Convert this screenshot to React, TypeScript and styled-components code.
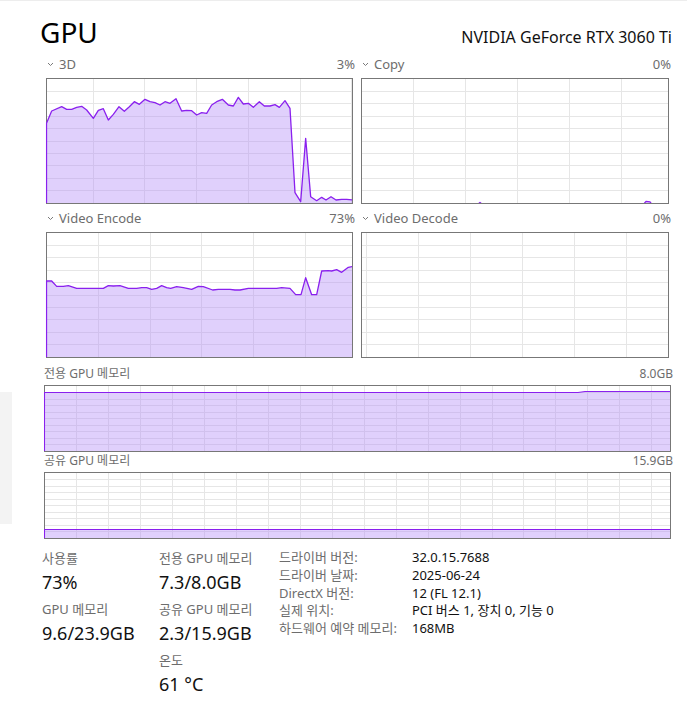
import React from "react";
import styled, { createGlobalStyle } from "styled-components";

const FONT = `"Noto Sans", "Noto Sans CJK KR", sans-serif`;

const GlobalStyle = createGlobalStyle`
  html, body { margin: 0; padding: 0; background: #ffffff; }
  body { font-family: ${FONT}; overflow: hidden; }
`;

type Pt = [number, number];

const Page = styled.div`
  display: flex;
  width: 687px;
  height: 701px;
  box-sizing: border-box;
  border-top: 1px solid #ededed;
  font-family: ${FONT};
`;

const SideStrip = styled.div`
  width: 12px;
  flex: none;
`;

const SideBlock = styled.div`
  margin-top: 391px;
  height: 132px;
  background: #f3f3f3;
`;

const Main = styled.div`
  margin-left: 28px;
  width: 632px;
  display: flex;
  flex-direction: column;
`;

const Header = styled.header`
  display: flex;
  justify-content: space-between;
  align-items: baseline;
  padding-top: 14px;
`;

const Title = styled.h1`
  margin: 0;
  font-size: 28px;
  line-height: 34px;
  font-weight: 400;
  color: #000;
`;

const Model = styled.div`
  font-size: 16px;
  line-height: 20px;
  color: #111;
`;

const ChartGrid = styled.div`
  display: grid;
  grid-template-columns: 307px 308px;
  column-gap: 8px;
  row-gap: 6px;
  margin: 7px 0 0 6px;
`;

const Cell = styled.div`
  display: flex;
  flex-direction: column;
`;

const LabelRow = styled.div<{ $gap?: number; $size?: number }>`
  display: flex;
  justify-content: space-between;
  align-items: center;
  height: 16px;
  font-size: ${(p) => p.$size ?? 13}px;
  line-height: 16px;
  color: #6d6d6d;
  margin-bottom: ${(p) => p.$gap ?? 6}px;
`;

const LabelName = styled.span`
  display: flex;
  align-items: center;
  gap: 5px;
  padding-left: 1px;
`;

const Percent = styled.span`
  margin-right: -2px;
`;

const ChartBox = styled.div<{ $h: number }>`
  box-sizing: border-box;
  border: 1px solid #777;
  height: ${(p) => p.$h}px;
  width: 100%;
  svg {
    display: block;
  }
`;

const MemorySection = styled.section`
  display: flex;
  flex-direction: column;
  margin-top: 8px;
  padding-left: 4px;
  width: 627px;
`;

const MemBlock = styled.div<{ $top?: number }>`
  display: flex;
  flex-direction: column;
  margin-top: ${(p) => p.$top ?? 0}px;
`;

const Stats = styled.div`
  display: grid;
  grid-template-columns: 117px 120px auto;
  align-items: start;
  margin-top: 10px;
  padding-left: 2px;
`;

const StatCol = styled.div`
  display: flex;
  flex-direction: column;
`;

const Stat = styled.div`
  display: flex;
  flex-direction: column;
  margin-bottom: 6px;
`;

const StatLabel = styled.div`
  font-size: 13px;
  line-height: 18px;
  color: #6d6d6d;
`;

const StatValue = styled.div`
  font-size: 18px;
  line-height: 24px;
  color: #111;
  margin-top: 3px;
`;

const InfoGrid = styled.dl`
  display: grid;
  grid-template-columns: 133px auto;
  align-content: start;
  margin: 0;
  font-size: 13px;
  line-height: 17.75px;
`;

const InfoKey = styled.dt`
  margin: 0;
  color: #6d6d6d;
`;

const InfoVal = styled.dd`
  margin: 0;
  color: #111;
`;

const Chevron = () => (
  <svg width="7" height="5" viewBox="0 0 7 5">
    <polyline points="1,1 3.5,3.5 6,1" fill="none" stroke="#7a7a7a" strokeWidth="1" />
  </svg>
);

interface ChartProps {
  id: string;
  w: number;
  h: number;
  rows: number;
  offX: number;
  stepX: number;
  pts?: Pt[];
  strokeW?: number;
}

const Chart = ({ id, w, h, rows, offX, stepX, pts, strokeW = 1.3 }: ChartProps) => {
  const vx: number[] = [];
  for (let x = offX; x < w; x += stepX) vx.push(Math.floor(x) + 0.5);
  const hy: number[] = [];
  for (let k = 1; k < rows; k++) hy.push(Math.floor((k * h) / rows) + 0.5);
  let fill = "";
  let line = "";
  if (pts && pts.length) {
    const first = pts[0];
    const last = pts[pts.length - 1];
    const body = pts.map((p) => `L${p[0].toFixed(2)},${p[1].toFixed(2)}`).join(" ");
    fill = `M${Math.max(0, first[0])},${h} ${body} L${last[0]},${h} Z`;
    line = `M${first[0]},${h + 1} ${body}`;
  }
  return (
    <svg width={w} height={h} overflow="visible">
      <defs>
        <clipPath id={id}>
          <rect x={-1.2} y={0} width={w + 1.2} height={h} />
        </clipPath>
      </defs>
      <rect x={0} y={0} width={w} height={h} fill="#ffffff" />
      <g stroke="#e6e6e6" strokeWidth="1" shapeRendering="crispEdges">
        {vx.map((x) => (
          <line key={"v" + x} x1={x} y1={0} x2={x} y2={h} />
        ))}
        {hy.map((y) => (
          <line key={"h" + y} x1={0} y1={y} x2={w} y2={y} />
        ))}
      </g>
      {pts && (
        <g clipPath={`url(#${id})`}>
          <path d={fill} fill="rgb(178,138,248)" fillOpacity="0.4" stroke="none" />
          <path d={line} fill="none" stroke="#8a20ee" strokeWidth={strokeW} strokeLinejoin="round" />
        </g>
      )}
    </svg>
  );
};

const raw3D: Pt[] = [
  [20, 160], [35, 123], [65, 110], [80, 118], [95, 118], [110, 112], [125, 109], [140, 120], [160, 145],
  [175, 121], [190, 116], [205, 150], [220, 133], [237, 110], [253, 124], [268, 110], [283, 95], [298, 103],
  [315, 88], [330, 95], [345, 98], [360, 105], [375, 95], [390, 100], [408, 86], [425, 123], [440, 121],
  [455, 122], [470, 135], [485, 128], [500, 130], [515, 105], [530, 95], [547, 88], [565, 105], [580, 108],
  [595, 82], [610, 102], [625, 100], [640, 112], [658, 95], [673, 108], [690, 108], [705, 104], [718, 112],
  [735, 92], [750, 115], [765, 368], [782, 395], [797, 205], [812, 380], [830, 392], [845, 382], [858, 390],
  [873, 380], [888, 390], [905, 388], [920, 388], [938, 390],
];

const rawEncode: Pt[] = [
  [140, 243], [155, 243], [170, 259], [190, 259], [205, 257], [230, 265], [250, 265], [310, 265], [325, 257],
  [340, 258], [360, 257], [385, 265], [410, 265], [425, 263], [440, 263], [455, 268], [470, 265], [485, 257],
  [500, 263], [512, 265], [530, 260], [550, 263], [575, 268], [595, 259], [610, 260], [638, 270], [655, 268],
  [690, 268], [705, 270], [720, 270], [745, 265], [760, 265], [830, 265], [845, 263], [870, 265], [887, 284],
  [903, 284], [917, 233], [935, 284], [950, 284], [965, 213], [985, 212], [995, 213], [1010, 209], [1025, 217],
  [1045, 202], [1060, 199],
];

const mapPts = (r: Pt[], ox: number, oy: number): Pt[] =>
  r.map(([X, Y], i) => [i === 0 ? -0.5 : X / 3 + ox, Y / 3 + oy] as Pt);

const pts3D = mapPts(raw3D, -7, -9);
const ptsEncode = mapPts(rawEncode, -47, -33);

const CH = 124;
const ptsCopy: Pt[] = [
  [-0.5, CH + 3], [114, CH + 3], [118, CH - 0.6], [122, CH + 3], [280, CH + 3], [284, CH - 1.6],
  [288, CH - 1.2], [291, CH + 3], [307, CH + 3],
];

const ptsDedicated: Pt[] = [[-0.5, 6.5], [533, 6.5], [540, 5.5], [626, 5.5]];
const ptsShared: Pt[] = [[-0.5, 56.5], [626, 56.5]];

interface PanelProps {
  name: string;
  value: string;
  children: React.ReactNode;
}

const Panel = ({ name, value, children }: PanelProps) => (
  <Cell>
    <LabelRow>
      <LabelName>
        <Chevron />
        {name}
      </LabelName>
      <Percent>{value}</Percent>
    </LabelRow>
    <ChartBox $h={126}>{children}</ChartBox>
  </Cell>
);

export default function App() {
  return (
    <>
      <GlobalStyle />
      <Page>
        <SideStrip>
          <SideBlock />
        </SideStrip>
        <Main>
          <Header>
            <Title>GPU</Title>
            <Model>NVIDIA GeForce RTX 3060 Ti</Model>
          </Header>

          <ChartGrid>
            <Panel name="3D" value="3%">
              <Chart id="c3d" w={305} h={CH} rows={10} offX={46} stepX={51.75} pts={pts3D} />
            </Panel>
            <Panel name="Copy" value="0%">
              <Chart id="ccopy" w={306} h={CH} rows={10} offX={51.3} stepX={52} pts={ptsCopy} />
            </Panel>
            <Panel name="Video Encode" value="73%">
              <Chart id="cenc" w={305} h={CH} rows={10} offX={51.3} stepX={51.75} pts={ptsEncode} />
            </Panel>
            <Panel name="Video Decode" value="0%">
              <Chart id="cdec" w={306} h={CH} rows={10} offX={4} stepX={52} />
            </Panel>
          </ChartGrid>

          <MemorySection>
            <MemBlock>
              <LabelRow $gap={3} $size={12}>
                <span>전용 GPU 메모리</span>
                <Percent>8.0GB</Percent>
              </LabelRow>
              <ChartBox $h={67}>
                <Chart id="mded" w={625} h={65} rows={10} offX={31.7} stepX={31.95} pts={ptsDedicated} strokeW={1.1} />
              </ChartBox>
            </MemBlock>
            <MemBlock $top={1}>
              <LabelRow $gap={3} $size={12}>
                <span>공유 GPU 메모리</span>
                <Percent>15.9GB</Percent>
              </LabelRow>
              <ChartBox $h={67}>
                <Chart id="mshr" w={625} h={65} rows={10} offX={31.7} stepX={31.95} pts={ptsShared} strokeW={1.1} />
              </ChartBox>
            </MemBlock>
          </MemorySection>

          <Stats>
            <StatCol>
              <Stat>
                <StatLabel>사용률</StatLabel>
                <StatValue>73%</StatValue>
              </Stat>
              <Stat>
                <StatLabel>GPU 메모리</StatLabel>
                <StatValue>9.6/23.9GB</StatValue>
              </Stat>
            </StatCol>
            <StatCol>
              <Stat>
                <StatLabel>전용 GPU 메모리</StatLabel>
                <StatValue>7.3/8.0GB</StatValue>
              </Stat>
              <Stat>
                <StatLabel>공유 GPU 메모리</StatLabel>
                <StatValue>2.3/15.9GB</StatValue>
              </Stat>
              <Stat>
                <StatLabel>온도</StatLabel>
                <StatValue>61 °C</StatValue>
              </Stat>
            </StatCol>
            <InfoGrid>
              <InfoKey>드라이버 버전:</InfoKey>
              <InfoVal>32.0.15.7688</InfoVal>
              <InfoKey>드라이버 날짜:</InfoKey>
              <InfoVal>2025-06-24</InfoVal>
              <InfoKey>DirectX 버전:</InfoKey>
              <InfoVal>12 (FL 12.1)</InfoVal>
              <InfoKey>실제 위치:</InfoKey>
              <InfoVal>PCI 버스 1, 장치 0, 기능 0</InfoVal>
              <InfoKey>하드웨어 예약 메모리:</InfoKey>
              <InfoVal>168MB</InfoVal>
            </InfoGrid>
          </Stats>
        </Main>
      </Page>
    </>
  );
}
